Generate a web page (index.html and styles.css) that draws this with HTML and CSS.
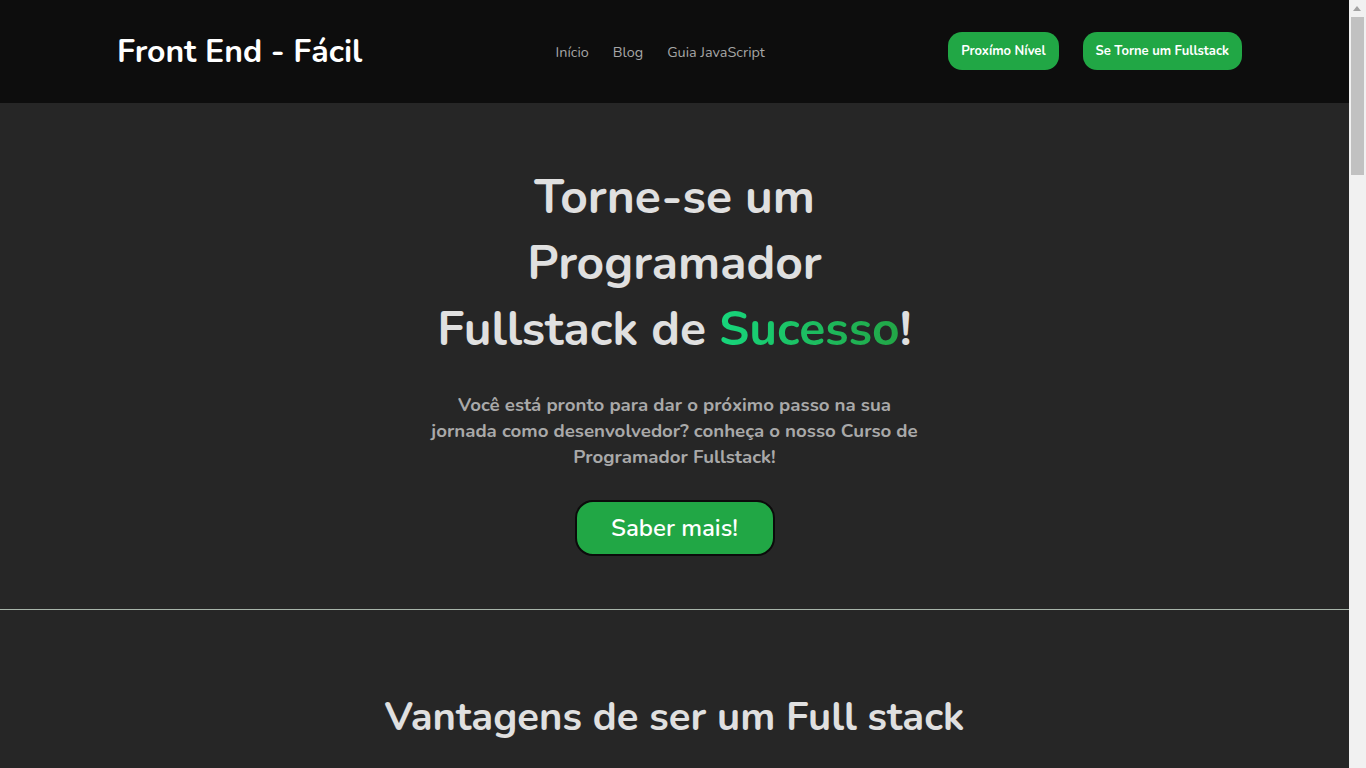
FILE: index.html
```html
<!DOCTYPE html>
<html lang="pt-BR">
<head>
<meta charset="utf-8">
<title>Front End - Fácil</title>
<link rel="stylesheet" href="styles.css">
</head>
<body>
<div class="page">
  <header class="topbar">
    <a class="logo" href="#">Front End - Fácil</a>
    <nav class="nav">
      <a href="#">Início</a>
      <a href="#">Blog</a>
      <a href="#">Guia JavaScript</a>
    </nav>
    <div class="actions">
      <a class="btn-small" href="#">Proxímo Nível</a>
      <a class="btn-small" href="#">Se Torne um Fullstack</a>
    </div>
  </header>
  <main>
    <section class="hero">
      <h1 class="hero-title">Torne-se um<br>Programador<br>Fullstack de <span class="accent">Sucesso</span>!</h1>
      <p class="hero-text">Você está pronto para dar o próximo passo na sua<br>jornada como desenvolvedor? conheça o nosso Curso de<br>Programador Fullstack!</p>
      <a class="btn-big" href="#">Saber mais!</a>
    </section>
    <section class="advantages">
      <h2 class="section-title">Vantagens de ser um Full stack</h2>
      <div class="spacer"></div>
    </section>
  </main>
</div>
<div class="scrollbar" aria-hidden="true">
  <div class="scroll-arrow"></div>
  <div class="scroll-thumb"></div>
</div>
</body>
</html>
```
FILE: styles.css
```css
* { box-sizing: border-box; }
html, body { margin: 0; padding: 0; }
body {
  background: #262626;
  font-family: Nunito, "Noto Sans", "Open Sans", sans-serif;
  color: #e0e0e0;
}
a { text-decoration: none; }
.page {
  width: calc(100% - 17px);
}
.topbar {
  height: 103px;
  background: #0d0d0d;
  display: flex;
  align-items: center;
  justify-content: space-between;
  padding: 0 107px 0 117px;
}
.logo {
  color: #ffffff;
  font-size: 32px;
  font-weight: 700;
  margin-top: 0;
}
.nav {
  display: flex;
  gap: 24px;
  margin-left: 10px;
}
.nav a {
  color: #a6a6a6;
  font-size: 14.4px;
}
.actions {
  display: flex;
  gap: 24px;
  margin-top: -2px;
}
.btn-small {
  background: #21a745;
  color: #ffffff;
  font-size: 13px;
  font-weight: 700;
  height: 38px;
  padding: 0 13px;
  border-radius: 14px;
  display: flex;
  align-items: center;
}
.hero {
  display: flex;
  flex-direction: column;
  align-items: center;
  text-align: center;
  padding: 61px 0 53px;
  border-bottom: 1px solid #a8b5aa;
}
.hero-title {
  margin: 0;
  font-size: 48px;
  line-height: 66px;
  font-weight: 700;
  color: #e0e0e0;
}
.accent {
  background: linear-gradient(90deg, #17d67c, #22a646);
  -webkit-background-clip: text;
  background-clip: text;
  color: transparent;
}
.hero-text {
  margin: 30px 0 0;
  font-size: 18.7px;
  line-height: 26px;
  font-weight: 700;
  color: #a9a9a9;
}
.btn-big {
  margin-top: 30px;
  width: 200px;
  height: 56px;
  background: #21a745;
  border: 2px solid #0b0b0b;
  border-radius: 18px;
  color: #ffffff;
  font-size: 24px;
  font-weight: 600;
  display: flex;
  align-items: center;
  justify-content: center;
}
.advantages {
  padding-top: 82px;
  text-align: center;
}
.section-title {
  margin: 0;
  font-size: 40px;
  line-height: 50px;
  font-weight: 700;
  color: #e0e0e0;
}
.spacer { height: 600px; }
.scrollbar {
  position: fixed;
  top: 0;
  right: 0;
  width: 17px;
  height: 100vh;
  background: #f1f1f1;
}
.scroll-arrow {
  position: absolute;
  top: 6px;
  left: 4px;
  width: 0;
  height: 0;
  border-left: 4.5px solid transparent;
  border-right: 4.5px solid transparent;
  border-bottom: 5px solid #a3a3a3;
}
.scroll-thumb {
  position: absolute;
  top: 17px;
  left: 2px;
  width: 13px;
  height: 158px;
  background: #c1c1c1;
}
```
